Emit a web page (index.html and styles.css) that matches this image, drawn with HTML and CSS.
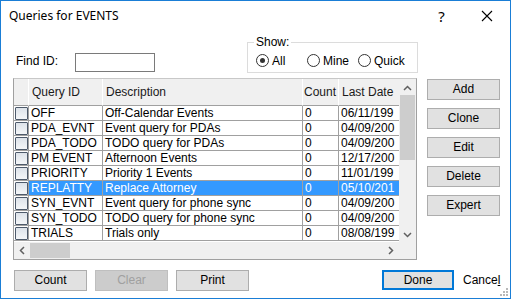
FILE: index.html
```
<!DOCTYPE html>
<html>
<head>
<meta charset="UTF-8">
<link rel="stylesheet" href="styles.css">
</head>
<body>
<div class="win">
  <div class="titlebar">
    <span class="title">Queries for EVENTS</span>
    <span class="help">?</span>
    <span class="close">
      <svg width="12" height="12" viewBox="0 0 12 12"><path d="M1 1L11 11M11 1L1 11" stroke="#000" stroke-width="1.1" fill="none"/></svg>
    </span>
  </div>

  <div class="content">
    <div class="toprow">
      <label class="findlbl">Find ID:</label>
      <div class="findbox"></div>
      <div class="show">
        <span class="legend">Show:</span>
        <div class="opt"><span class="radio on"></span><span class="rlbl">All</span></div>
        <div class="opt"><span class="radio"></span><span class="rlbl">Mine</span></div>
        <div class="opt"><span class="radio"></span><span class="rlbl">Quick</span></div>
      </div>
    </div>

    <div class="mainrow">
      <div class="grid">
        <div class="gridbody">
          <div class="cols">
            <div class="row head">
              <div class="c chk"></div>
              <div class="c id">Query ID</div>
              <div class="c desc">Description</div>
              <div class="c cnt">Count</div>
              <div class="c date">Last Date</div>
            </div>
            <div class="row"><div class="c chk"><span class="box"></span></div><div class="c id">OFF</div><div class="c desc">Off-Calendar Events</div><div class="c cnt">0</div><div class="c date">06/11/199</div></div>
            <div class="row"><div class="c chk"><span class="box"></span></div><div class="c id">PDA_EVNT</div><div class="c desc">Event query for PDAs</div><div class="c cnt">0</div><div class="c date">04/09/200</div></div>
            <div class="row"><div class="c chk"><span class="box"></span></div><div class="c id">PDA_TODO</div><div class="c desc">TODO query for PDAs</div><div class="c cnt">0</div><div class="c date">04/09/200</div></div>
            <div class="row"><div class="c chk"><span class="box"></span></div><div class="c id">PM EVENT</div><div class="c desc">Afternoon Events</div><div class="c cnt">0</div><div class="c date">12/17/200</div></div>
            <div class="row"><div class="c chk"><span class="box"></span></div><div class="c id">PRIORITY</div><div class="c desc">Priority 1 Events</div><div class="c cnt">0</div><div class="c date">11/01/199</div></div>
            <div class="row sel"><div class="c chk"><span class="box"></span></div><div class="c id">REPLATTY</div><div class="c desc">Replace Attorney</div><div class="c cnt">0</div><div class="c date">05/10/201</div></div>
            <div class="row"><div class="c chk"><span class="box"></span></div><div class="c id">SYN_EVNT</div><div class="c desc">Event query for phone sync</div><div class="c cnt">0</div><div class="c date">04/09/200</div></div>
            <div class="row"><div class="c chk"><span class="box"></span></div><div class="c id">SYN_TODO</div><div class="c desc">TODO query for phone sync</div><div class="c cnt">0</div><div class="c date">04/09/200</div></div>
            <div class="row"><div class="c chk"><span class="box"></span></div><div class="c id">TRIALS</div><div class="c desc">Trials only</div><div class="c cnt">0</div><div class="c date">08/08/199</div></div>
          </div>
          <div class="vscroll">
            <svg class="arr" width="9" height="6" viewBox="0 0 9 6"><path d="M1 5L4.5 1.5L8 5" stroke="#606060" stroke-width="1.5" fill="none"/></svg>
            <div class="vthumb"></div>
            <div class="vfill"></div>
            <svg class="arr" width="9" height="6" viewBox="0 0 9 6"><path d="M1 1L4.5 4.5L8 1" stroke="#606060" stroke-width="1.5" fill="none"/></svg>
          </div>
        </div>
        <div class="hscroll">
          <svg class="harr" width="6" height="9" viewBox="0 0 6 9"><path d="M5 1L1.5 4.5L5 8" stroke="#606060" stroke-width="1.5" fill="none"/></svg>
          <div class="hthumb"></div>
          <div class="hfill"></div>
          <svg class="harr" width="6" height="9" viewBox="0 0 6 9"><path d="M1 1L4.5 4.5L1 8" stroke="#606060" stroke-width="1.5" fill="none"/></svg>
          <div class="corner"></div>
        </div>
      </div>

      <div class="sidebtns">
        <div class="btn">Add</div>
        <div class="btn">Clone</div>
        <div class="btn">Edit</div>
        <div class="btn">Delete</div>
        <div class="btn">Expert</div>
      </div>
    </div>

    <div class="bottomrow">
      <div class="btn">Count</div>
      <div class="btn off">Clear</div>
      <div class="btn">Print</div>
      <div class="spacer"></div>
      <div class="btn done">Done</div>
      <div class="cancel">Cance<u>l</u></div>
    </div>
  </div>
  <div class="grip">
    <svg width="8" height="8" viewBox="0 0 8 8" fill="#b8b8b8">
      <rect x="6" y="0" width="2" height="2"/><rect x="3" y="3" width="2" height="2"/><rect x="6" y="3" width="2" height="2"/>
      <rect x="0" y="6" width="2" height="2"/><rect x="3" y="6" width="2" height="2"/><rect x="6" y="6" width="2" height="2"/>
    </svg>
  </div>
</div>
</body>
</html>
```

FILE: styles.css
```
body {
  margin: 0;
  background: #fff;
  font-family: "Liberation Sans", Arial, sans-serif;
  font-size: 12px;
  color: #000;
}

.win {
  position: relative;
  width: 511px;
  height: 299px;
  box-sizing: border-box;
  border: 1px solid #1a7ed6;
  background: #fff;
  overflow: hidden;
}

/* title bar */
.titlebar {
  height: 29px;
  display: flex;
  align-items: center;
  padding-left: 8px;
}
.title {
  font-family: "Noto Sans", "Open Sans", sans-serif;
  font-size: 12px;
  flex: 1;
}
.help {
  font-family: "Noto Sans", sans-serif;
  font-size: 15px;
  width: 45px;
  text-align: center;
  margin-top: 1px;
}
.close {
  width: 46px;
  display: flex;
  justify-content: center;
}

.content {
  padding-left: 12px;
}

/* find + show row */
.toprow {
  display: flex;
  align-items: flex-end;
  height: 42px;
}
.findlbl {
  margin-left: 3px;
  width: 59px;
  padding-bottom: 4px;
}
.findbox {
  width: 80px;
  height: 19px;
  box-sizing: border-box;
  border: 1px solid #7a7a7a;
}
.show {
  position: relative;
  margin-left: 92px;
  margin-bottom: -1px;
  padding-left: 8px;
  width: 171px;
  height: 31px;
  box-sizing: border-box;
  border: 1px solid #dcdcdc;
  display: flex;
  align-items: center;
  padding-top: 6px;
}
.legend {
  position: absolute;
  left: 6px;
  top: -8px;
  padding: 0 2px;
  background: #fff;
  line-height: 14px;
}
.opt {
  width: 51px;
  display: flex;
  align-items: center;
}
.radio {
  width: 11px;
  height: 11px;
  border: 1px solid #333;
  border-radius: 50%;
  position: relative;
  flex: none;
}
.radio.on::after {
  content: "";
  position: absolute;
  left: 3px;
  top: 3px;
  width: 5px;
  height: 5px;
  border-radius: 50%;
  background: #333;
}
.rlbl {
  margin-left: 3px;
}

/* grid + buttons */
.mainrow {
  display: flex;
  margin-top: 6px;
}
.grid {
  width: 404px;
  height: 182px;
  box-sizing: border-box;
  border: 1px solid #a0a0a0;
  border-top-color: #c8c8c8;
  display: flex;
  flex-direction: column;
}
.gridbody {
  display: flex;
  height: 163px;
}
.cols {
  width: 385px;
  overflow: hidden;
}
.row {
  display: grid;
  grid-template-columns: 15px 74px 200px 36px 60px;
  height: 15px;
}
.c {
  border-right: 1px solid #a0a0a0;
  border-bottom: 1px solid #a0a0a0;
  line-height: 14px;
  padding-left: 2px;
  white-space: nowrap;
  overflow: hidden;
}
.c.date { border-right: none; }
.c.chk { padding-left: 0; }
.row.head { height: 27px; }
.row.head .c {
  background: #f0f0f0;
  border-right: 1px solid #fff;
  border-bottom: 1px solid #a0a0a0;
  line-height: 27px;
  padding-left: 3px;
  color: #1a1a1a;
}
.row.head .c.cnt { padding-left: 1px; }
.row.head .c.date { border-right: none; }
.row.sel .c { background: #3399ff; color: #fff; }
.row.sel .c.chk { background: #fff; }
.box {
  display: block;
  width: 11px;
  height: 11px;
  margin: 1px 0 0 1px;
  border: 1px solid #4d5a6b;
  border-radius: 1px;
  background: linear-gradient(#dde3ea, #f4f6f8);
}

.vscroll {
  width: 17px;
  background: #f0f0f0;
  display: flex;
  flex-direction: column;
  align-items: center;
}
.vscroll .arr { margin: 6px 0 4px; flex: none; }
.vthumb {
  width: 15px;
  height: 65px;
  background: #cdcdcd;
  flex: none;
}
.vfill { flex: 1; }

.hscroll {
  height: 17px;
  background: #f0f0f0;
  display: flex;
  align-items: center;
}
.harr { margin: 0 5px; flex: none; }
.hthumb {
  width: 40px;
  height: 15px;
  background: #cdcdcd;
}
.hfill { flex: 1; }
.corner { width: 17px; }

.sidebtns {
  display: flex;
  flex-direction: column;
  gap: 8px;
  margin-left: 10px;
  margin-top: 1px;
}

.btn {
  width: 73px;
  height: 21px;
  box-sizing: border-box;
  border: 1px solid #adadad;
  background: #e1e1e1;
  text-align: center;
  line-height: 19px;
}
.btn.off {
  background: #cccccc;
  border-color: #bfbfbf;
  color: #a0a0a0;
}
.btn.done {
  border: 2px solid #0078d7;
  line-height: 17px;
  width: 72px;
  height: 20px;
}

.bottomrow {
  display: flex;
  gap: 8px;
  margin-top: 10px;
  margin-left: 1px;
  align-items: flex-start;
}
.spacer { width: 117px; }
.cancel {
  margin-left: 1px;
  line-height: 20px;
}
.cancel u { text-decoration-thickness: 1px; }

.grip {
  position: absolute;
  right: 2px;
  bottom: 2px;
  line-height: 0;
}
```
